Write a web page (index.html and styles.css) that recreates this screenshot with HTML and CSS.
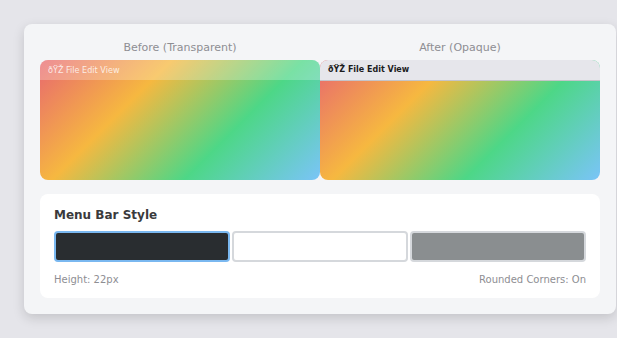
FILE: index.html
```html
<!DOCTYPE html>
<html lang="en">
<head>
    <meta charset="UTF-8" />
    <title>Menu Bar Style</title>
    <link rel="stylesheet" href="styles.css">
</head>
<body>
    <div class="card">
        <div class="compare">
            <div class="column">
                <p class="label">Before (Transparent)</p>
                <div class="preview left">
                    <div class="menubar transparent">ðŸŽ File Edit View</div>
                </div>
            </div>
            <div class="column">
                <p class="label">After (Opaque)</p>
                <div class="preview right">
                    <div class="menubar opaque">ðŸŽ File Edit View</div>
                </div>
            </div>
        </div>

        <section class="panel">
            <h2>Menu Bar Style</h2>
            <div class="swatches">
                <button class="swatch dark selected"></button>
                <button class="swatch light"></button>
                <button class="swatch grey"></button>
            </div>
            <div class="meta">
                <span>Height: 22px</span>
                <span>Rounded Corners: On</span>
            </div>
        </section>
    </div>
</body>
</html>
```

FILE: styles.css
```css
body,
h2,
p {
  margin: 0;
  padding: 0;
}

* {
  box-sizing: border-box;
}

body {
  font-family: 'DejaVu Sans', sans-serif;
  background-color: #e5e5ea;
  padding: 24px;
  height: 100vh;
  overflow: hidden;
}

.card {
  width: 592px;
  background-color: #f4f5f7;
  border-radius: 8px;
  padding: 16px;
  box-shadow: 0 4px 12px rgba(0, 0, 0, 0.15);
}

.compare {
  display: grid;
  grid-template-columns: 1fr 1fr;
}

.label {
  text-align: center;
  font-size: 11px;
  line-height: 14px;
  color: #8e8e93;
  padding-top: 1px;
  margin-bottom: 5px;
}

.preview {
  height: 120px;
  border-radius: 8px;
  overflow: hidden;
  background: linear-gradient(135deg, #e8686f 0%, #f6b840 33%, #4dd787 66%, #7ac4f8 100%);
}

.menubar {
  height: 20px;
  padding: 0 8px;
  font-size: 8px;
  line-height: 20px;
}

.menubar.transparent {
  background-color: rgba(255, 255, 255, 0.25);
  color: rgba(255, 255, 255, 0.8);
  font-family: 'DejaVu Sans Condensed', 'DejaVu Sans', sans-serif;
  font-size: 9px;
}

.menubar.opaque {
  background-color: #e6e6eb;
  border-bottom: 1px solid #c4c4c9;
  color: #1c1c1e;
  font-weight: bold;
  height: 21px;
}

.panel {
  margin-top: 14px;
  background-color: #fff;
  border-radius: 8px;
  padding: 14px 14px 12px;
}

.panel h2 {
  font-size: 12px;
  line-height: 15px;
  color: #3a3a3c;
}

.swatches {
  display: flex;
  gap: 2px;
  margin-top: 8px;
}

.swatch {
  flex: 1;
  height: 31px;
  border-radius: 4px;
  border: 2px solid #d5d8dc;
  padding: 0;
}

.swatch.dark {
  background-color: #292d30;
}

.swatch.light {
  background-color: #fff;
}

.swatch.grey {
  background-color: #8a8e90;
}

.swatch.selected {
  border-color: #7ab8f0;
}

.meta {
  display: flex;
  justify-content: space-between;
  margin-top: 11px;
  font-size: 10px;
  line-height: 13px;
  color: #8e8e93;
}
```
